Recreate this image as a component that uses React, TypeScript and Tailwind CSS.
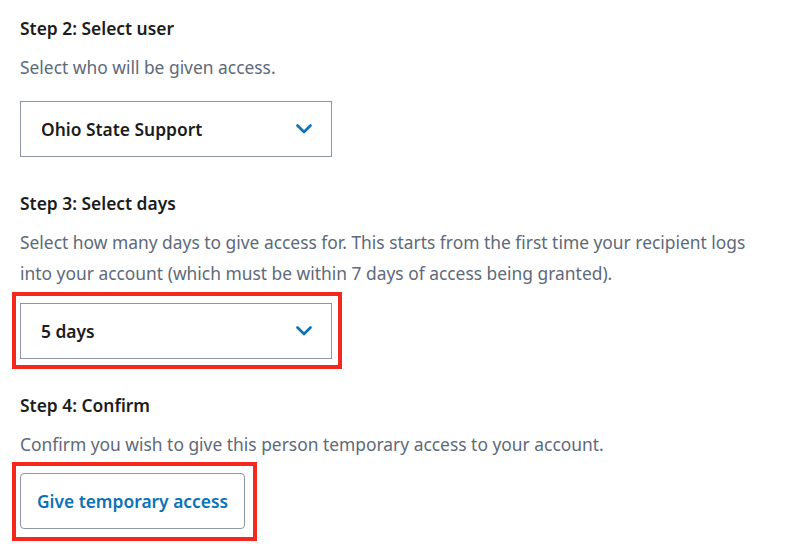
import React from 'react';

const Chevron: React.FC = () => (
  <svg width="16" height="10" viewBox="0 0 16 10" fill="none" className="shrink-0">
    <path d="M1.5 1.5 L8 8 L14.5 1.5" stroke="#0a72b6" strokeWidth="2.6" strokeLinecap="round" strokeLinejoin="round" />
  </svg>
);

const SelectBox: React.FC<{ value: string }> = ({ value }) => (
  <div className="w-[312px] h-[56px] border border-[#8c97a3] bg-white flex items-center justify-between pl-5 pr-[19px]">
    <span className="text-[17.4px] font-semibold text-[#1c1c1c]">{value}</span>
    <Chevron />
  </div>
);

const Highlight: React.FC<{ children: React.ReactNode; className?: string }> = ({ children, className }) => (
  <div className="relative w-fit">
    {children}
    {/* red annotation drawn over the control */}
    <div className={'absolute border-4 border-[#f5281e] pointer-events-none ' + (className ?? '')} />
  </div>
);

export default function App() {
  return (
    <div className="min-h-screen bg-white px-5 pt-4 font-['Noto_Sans','Open_Sans',sans-serif] text-[17.4px]">
      {/* Step 2 */}
      <h3 className="font-semibold leading-6 text-[#1c1c1c]">Step 2: Select user</h3>
      <p className="mt-3 leading-[31px] text-[#5d6979]">Select who will be given access.</p>
      <div className="mt-[18px]">
        <SelectBox value="Ohio State Support" />
      </div>

      {/* Step 3 */}
      <h3 className="mt-[34px] font-semibold leading-6 text-[#1c1c1c]">Step 3: Select days</h3>
      <p className="mt-3 leading-[31px] text-[#5d6979]">
        Select how many days to give access for. This starts from the first time your recipient logs into your
        account (which must be within 7 days of access being granted).
      </p>
      <div className="mt-[14px]">
        <Highlight className="-top-[11px] -bottom-[10px] -left-[8px] -right-[10px]">
          <SelectBox value="5 days" />
        </Highlight>
      </div>

      {/* Step 4 */}
      <h3 className="mt-[34px] font-semibold leading-6 text-[#1c1c1c]">Step 4: Confirm</h3>
      <p className="mt-3 leading-[31px] text-[#5d6979]">
        Confirm you wish to give this person temporary access to your account.
      </p>
      <div className="mt-[13px]">
        <Highlight className="-top-[11px] -bottom-[12px] -left-[8px] -right-[12px]">
          <button className="w-[225px] h-[56px] rounded border border-[#8c97a3] bg-white font-semibold text-[#0a72b6]">
            Give temporary access
          </button>
        </Highlight>
      </div>
    </div>
  );
}
